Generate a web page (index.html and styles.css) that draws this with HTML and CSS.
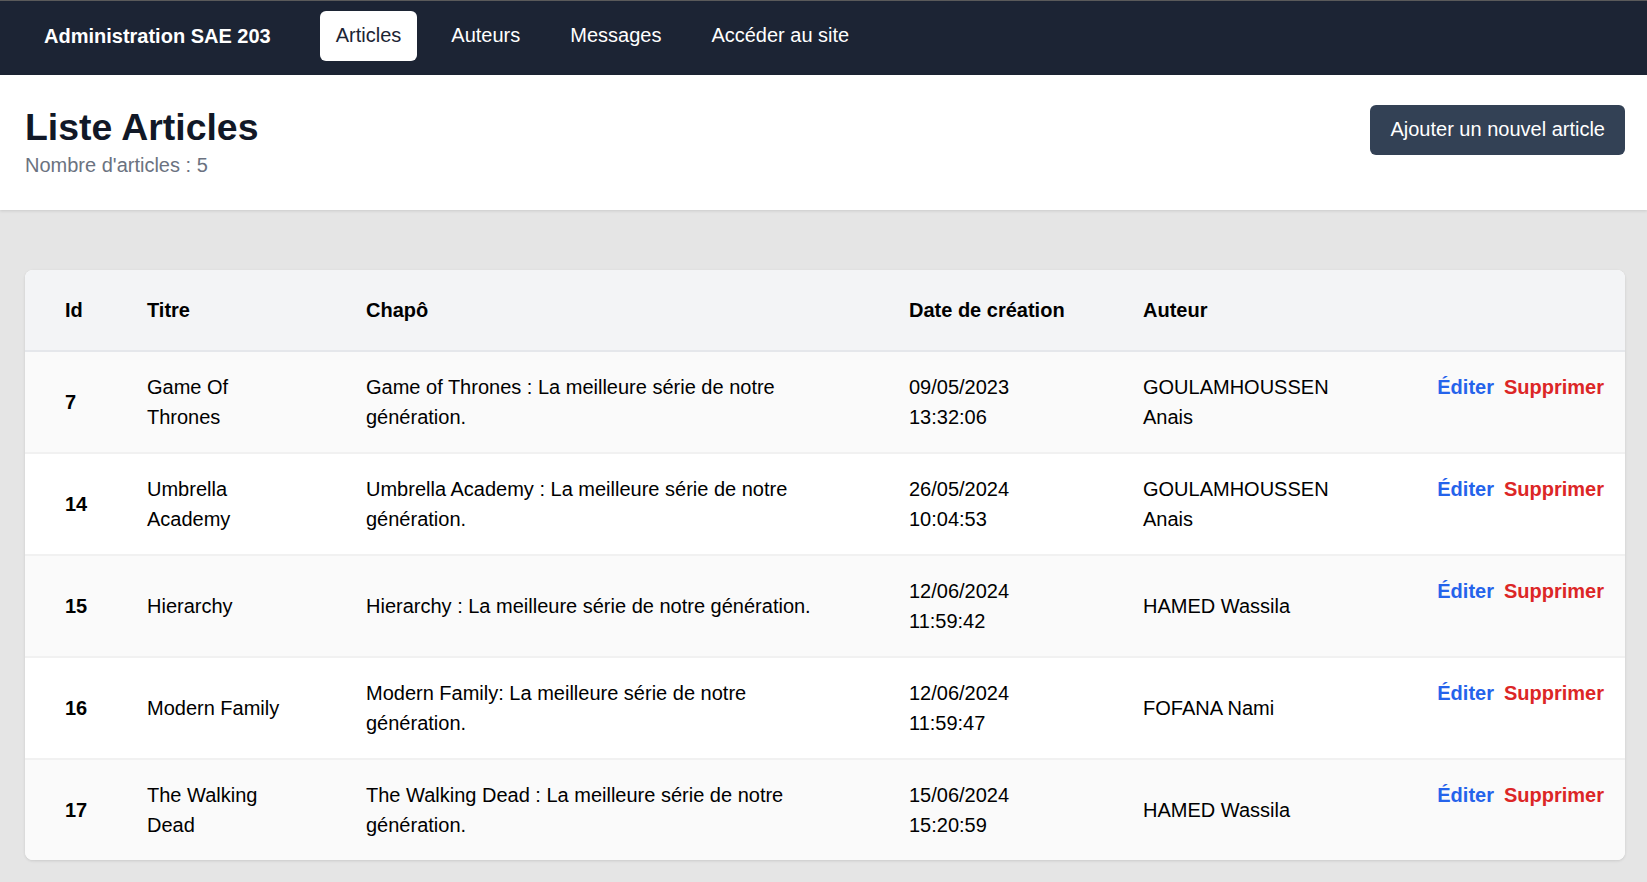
FILE: index.html
```html
<!DOCTYPE html>
<html lang="fr">
<head>
<meta charset="utf-8">
<title>Liste Articles</title>
<link rel="stylesheet" href="styles.css">
</head>
<body>
<nav class="topnav">
  <span class="brand">Administration SAE 203</span>
  <ul class="menu">
    <li><a class="menu-link active" href="#">Articles</a></li>
    <li><a class="menu-link" href="#">Auteurs</a></li>
    <li><a class="menu-link" href="#">Messages</a></li>
    <li><a class="menu-link" href="#">Accéder au site</a></li>
  </ul>
</nav>
<header class="page-header">
  <div class="page-heading">
    <h1 class="page-title">Liste Articles</h1>
    <p class="page-count">Nombre d'articles : 5</p>
  </div>
  <a class="btn-add" href="#">Ajouter un nouvel article</a>
</header>
<main class="content">
  <div class="card">
    <table class="articles">
      <colgroup>
        <col class="c-id"><col class="c-title"><col class="c-chapo"><col class="c-date"><col class="c-author"><col class="c-actions">
      </colgroup>
      <thead>
        <tr>
          <th class="cell-id">Id</th>
          <th>Titre</th>
          <th>Chapô</th>
          <th class="nowrap">Date de création</th>
          <th>Auteur</th>
          <th></th>
        </tr>
      </thead>
      <tbody>
        <tr>
          <td class="cell-id">7</td>
          <td class="cell-title">Game Of Thrones</td>
          <td class="cell-chapo">Game of Thrones : La meilleure série de notre génération.</td>
          <td class="cell-date">09/05/2023 13:32:06</td>
          <td class="cell-author">GOULAMHOUSSEN Anais</td>
          <td class="cell-actions"><a class="act-edit" href="#">Éditer</a><a class="act-del" href="#">Supprimer</a></td>
        </tr>
        <tr>
          <td class="cell-id">14</td>
          <td class="cell-title">Umbrella Academy</td>
          <td class="cell-chapo">Umbrella Academy : La meilleure série de notre génération.</td>
          <td class="cell-date">26/05/2024 10:04:53</td>
          <td class="cell-author">GOULAMHOUSSEN Anais</td>
          <td class="cell-actions"><a class="act-edit" href="#">Éditer</a><a class="act-del" href="#">Supprimer</a></td>
        </tr>
        <tr>
          <td class="cell-id">15</td>
          <td class="cell-title">Hierarchy</td>
          <td class="cell-chapo">Hierarchy : La meilleure série de notre génération.</td>
          <td class="cell-date">12/06/2024 11:59:42</td>
          <td class="cell-author">HAMED Wassila</td>
          <td class="cell-actions"><a class="act-edit" href="#">Éditer</a><a class="act-del" href="#">Supprimer</a></td>
        </tr>
        <tr>
          <td class="cell-id">16</td>
          <td class="cell-title">Modern Family</td>
          <td class="cell-chapo">Modern Family: La meilleure série de notre génération.</td>
          <td class="cell-date">12/06/2024 11:59:47</td>
          <td class="cell-author">FOFANA Nami</td>
          <td class="cell-actions"><a class="act-edit" href="#">Éditer</a><a class="act-del" href="#">Supprimer</a></td>
        </tr>
        <tr>
          <td class="cell-id">17</td>
          <td class="cell-title">The Walking Dead</td>
          <td class="cell-chapo">The Walking Dead : La meilleure série de notre génération.</td>
          <td class="cell-date">15/06/2024 15:20:59</td>
          <td class="cell-author">HAMED Wassila</td>
          <td class="cell-actions"><a class="act-edit" href="#">Éditer</a><a class="act-del" href="#">Supprimer</a></td>
        </tr>
      </tbody>
    </table>
  </div>
</main>
</body>
</html>
```

FILE: styles.css
```css
* { box-sizing: border-box; }

html, body {
  margin: 0;
  padding: 0;
}

body {
  background: #e5e5e5;
  font-family: "Liberation Sans", Arial, sans-serif;
  font-size: 20px;
  color: #000;
  min-height: 882px;
}

a { text-decoration: none; }

.topnav {
  display: flex;
  align-items: center;
  background: #1c2434;
  border-top: 1px solid #5a5a5a;
  padding: 10px 0 14px 44px;
  height: 75px;
}

.brand {
  color: #fff;
  font-weight: bold;
  font-size: 20px;
  margin-right: 49px;
}

.menu {
  display: flex;
  gap: 18px;
  list-style: none;
  margin: 0;
  padding: 0;
}

.menu-link {
  display: block;
  color: #fff;
  font-size: 20px;
  line-height: 29.5px;
  padding: 10px 16px;
  border-radius: 6px;
}

.menu-link.active {
  background: #fff;
  color: #1c2434;
}

.page-header {
  display: flex;
  justify-content: space-between;
  align-items: flex-start;
  background: #fff;
  height: 135px;
  padding: 30px 22px 0 25px;
  box-shadow: 0 1px 3px rgba(0, 0, 0, 0.12);
  position: relative;
}

.page-title {
  margin: 0;
  font-size: 37.4px;
  line-height: 44px;
  font-weight: bold;
  color: #111827;
}

.page-count {
  margin: 2px 0 0;
  font-size: 20px;
  line-height: 28px;
  color: #6b7280;
}

.btn-add {
  margin-top: 0;
  background: #334155;
  color: #fff;
  font-size: 20px;
  line-height: 29.5px;
  padding: 10px 20px;
  border-radius: 6px;
}

.content {
  padding: 60px 22px 23px 25px;
}

.card {
  background: #fff;
  border-radius: 8px;
  overflow: hidden;
  box-shadow: 0 1px 3px rgba(0, 0, 0, 0.12);
}

.articles {
  width: 100%;
  border-collapse: collapse;
  table-layout: fixed;
}

.c-id { width: 102px; }
.c-title { width: 219px; }
.c-chapo { width: 543px; }
.c-date { width: 234px; }
.c-author { width: 257px; }
.c-actions { width: 245px; }

.articles th,
.articles td {
  text-align: left;
  vertical-align: middle;
  font-size: 20px;
  line-height: 30px;
  padding: 20px 20px;
}

.articles thead tr {
  background: #f3f4f6;
  border-bottom: 2px solid #e5e7eb;
}

.articles th {
  font-weight: bold;
  padding-top: 25px;
  padding-bottom: 25px;
}

.articles th.nowrap { white-space: nowrap; }

.articles tbody tr {
  border-bottom: 2px solid #f1f1f1;
}

.articles tbody tr:last-child { border-bottom: none; }

.articles tbody tr:nth-child(odd) { background: #fafafa; }
.articles tbody tr:nth-child(even) { background: #fff; }

.articles .cell-id {
  padding-left: 40px;
}

.articles td.cell-id { font-weight: bold; }

.articles td.cell-title { padding-right: 59px; }
.articles td.cell-chapo { padding-right: 70px; }
.articles td.cell-date { padding-right: 100px; }
.articles td.cell-author { padding-right: 37px; }

.articles td.cell-actions {
  vertical-align: top;
  text-align: right;
  padding-right: 21px;
  white-space: nowrap;
}

.act-edit {
  color: #2563eb;
  font-weight: bold;
  margin-right: 10px;
}

.act-del {
  color: #dc2626;
  font-weight: bold;
}
```
